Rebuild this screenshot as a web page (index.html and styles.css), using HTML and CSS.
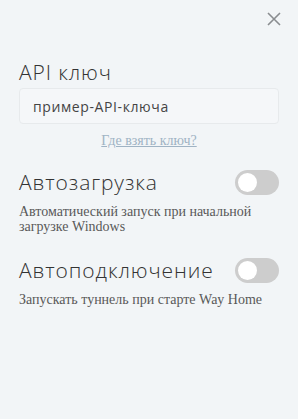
FILE: index.html
```html
<!DOCTYPE html>
<html lang="ru">

<head>
    <meta charset="UTF-8">
    <meta name="viewport" content="width=device-width, initial-scale=1.0">
    <title>Настройки</title>
    <link rel="stylesheet" href="styles.css">
</head>

<body>
    <div class="settings">
        <div class="top-bar">
            <button class="close-btn" title="Закрыть">
                <svg width="14" height="14" viewBox="0 0 14 14">
                    <path d="M1 1 L13 13 M13 1 L1 13" stroke="#8a8d90" stroke-width="1.6" fill="none" />
                </svg>
            </button>
        </div>

        <section class="block">
            <h2 class="title">API ключ</h2>
            <input class="key-input" type="text" value="пример-API-ключа">
            <a class="help-link" href="#">Где взять ключ?</a>
        </section>

        <section class="block">
            <div class="row">
                <h2 class="title">Автозагрузка</h2>
                <label class="switch">
                    <input type="checkbox">
                    <span class="slider"></span>
                </label>
            </div>
            <p class="desc">Автоматический запуск при начальной загрузке Windows</p>
        </section>

        <section class="block">
            <div class="row">
                <h2 class="title">Автоподключение</h2>
                <label class="switch">
                    <input type="checkbox">
                    <span class="slider"></span>
                </label>
            </div>
            <p class="desc">Запускать туннель при старте Way Home</p>
        </section>
    </div>
</body>

</html>
```

FILE: styles.css
```css
html,
body {
    margin: 0;
    height: 100%;
    background-color: #f2f5f7;
}

.settings {
    padding: 10px 19px 0 19px;
}

.top-bar {
    display: flex;
    justify-content: flex-end;
    margin-right: -4px;
}

.close-btn {
    background: none;
    border: none;
    padding: 2px;
    cursor: pointer;
}

.block {
    margin-bottom: 23px;
}

.block:first-of-type {
    margin-top: 28px;
    margin-bottom: 20px;
}

.title {
    font-family: "Open Sans", sans-serif;
    font-weight: 300;
    font-size: 21px;
    letter-spacing: 0.9px;
    color: #333;
    margin: 0;
    line-height: 26px;
}

.key-input {
    box-sizing: border-box;
    width: 100%;
    height: 36px;
    margin-top: 3px;
    padding: 0 13px;
    border: 1px solid #e7eaec;
    border-radius: 4px;
    background-color: #f5f7f9;
    font-family: "Open Sans", sans-serif;
    font-size: 14px;
    letter-spacing: 0.6px;
    color: #444;
    outline: none;
}

.help-link {
    display: block;
    text-align: center;
    margin-top: 9px;
    font-family: "Liberation Serif", serif;
    font-size: 14px;
    color: #9fb3c4;
}

.row {
    display: flex;
    justify-content: space-between;
    align-items: center;
}

.switch {
    position: relative;
    width: 44px;
    height: 25px;
    flex-shrink: 0;
}

.switch input {
    display: none;
}

.slider {
    display: block;
    width: 100%;
    height: 100%;
    border-radius: 13px;
    background-color: #cdcdcd;
}

.slider::before {
    content: "";
    position: absolute;
    left: 3px;
    top: 3px;
    width: 19px;
    height: 19px;
    border-radius: 50%;
    background-color: #fff;
}

.desc {
    margin: 9px 0 0 0;
    font-family: "Liberation Serif", serif;
    font-size: 14px;
    line-height: 15px;
    color: #595959;
}
```
